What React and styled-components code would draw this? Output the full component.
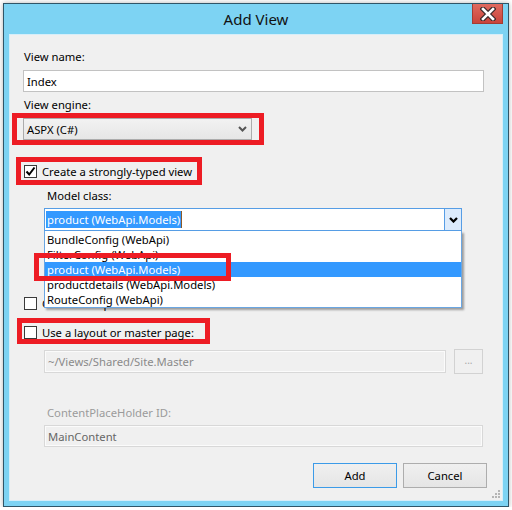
import React from "react";
import styled, { createGlobalStyle } from "styled-components";

const GlobalStyle = createGlobalStyle`
  html, body { margin: 0; padding: 0; background: #ffffff; }
  body { font-family: "Noto Sans", "Open Sans", sans-serif; font-size: 11.25px; color: #000; }
  * { box-sizing: border-box; }
`;

const Window = styled.div`
  margin: 3px 0 0 3px;
  width: 506px;
  height: 504px;
  border: 1px solid #2f5568;
  background: #7dd3f3;
  display: flex;
  flex-direction: column;
  position: relative;
  box-shadow: 0 0 5px rgba(0, 0, 0, 0.3);
`;

const TitleBar = styled.div`
  height: 30px;
  display: flex;
  align-items: center;
  justify-content: center;
  position: relative;
  font-size: 15px;
  color: #111;
  padding-bottom: 1px;
`;

const CloseButton = styled.div`
  position: absolute;
  top: 0;
  right: 5px;
  width: 31px;
  height: 20px;
  background: linear-gradient(#e06a5f, #c9443b);
  border: 1px solid #a33c33;
  border-top: none;
  display: flex;
  align-items: center;
  justify-content: center;
`;

const Client = styled.div`
  margin: 0 5px 5px 5px;
  flex: 1;
  background: #f0f0f0;
  box-shadow: inset 0 0 0 1px #d6eef9;
  position: relative;
  display: flex;
  flex-direction: column;
  align-items: flex-start;
`;

const Label = styled.div`
  margin-top: ${(p) => p.$top}px;
  margin-left: ${(p) => p.$left}px;
  height: 15px;
  line-height: 15px;
  white-space: nowrap;
  color: ${(p) => (p.$muted ? "#9b9b9b" : "#000")};
`;

const TextInput = styled.div`
  margin-top: ${(p) => p.$top}px;
  margin-left: ${(p) => p.$left}px;
  width: ${(p) => p.$width}px;
  height: ${(p) => p.$height || 22}px;
  border: 1px solid ${(p) => (p.$disabled ? "#d8d8d8" : "#c2c2c2")};
  box-shadow: ${(p) => (p.$disabled ? "inset 0 0 0 1px #fbfbfb" : "none")};
  background: ${(p) => (p.$disabled ? "#f0f0f0" : "#fff")};
  color: ${(p) => p.$color || "#000"};
  padding-left: 3px;
  display: flex;
  align-items: center;
  white-space: nowrap;
`;

const Highlight = styled.div`
  margin-top: ${(p) => p.$top}px;
  margin-left: ${(p) => p.$left}px;
  width: ${(p) => p.$width}px;
  height: ${(p) => p.$height}px;
  border: 5px solid #ed1c24;
  padding-left: ${(p) => p.$pad}px;
  display: flex;
  align-items: ${(p) => p.$align || "center"};
`;

const Select = styled.div`
  width: 229px;
  height: 22px;
  border: 1px solid #acacac;
  background: linear-gradient(#f2f2f2, #e6e6e6);
  display: flex;
  align-items: center;
  justify-content: space-between;
  padding: 0 4px 0 3px;
`;

const CheckRow = styled.div`
  display: flex;
  align-items: center;
  gap: 5px;
  margin-top: ${(p) => p.$top || 0}px;
  margin-left: ${(p) => p.$left || 0}px;
  height: 13px;
  white-space: nowrap;
`;

const Box = styled.div`
  width: 13px;
  height: 13px;
  border: 1px solid #3a3a3a;
  background: #fff;
  display: flex;
  align-items: center;
  justify-content: center;
  flex-shrink: 0;
`;

const ComboWrap = styled.div`
  margin-top: 5px;
  margin-left: 35px;
  width: 418px;
  height: 23px;
  position: relative;
  z-index: 2;
`;

const Combo = styled.div`
  width: 100%;
  height: 100%;
  border: 1px solid #569de5;
  background: #fff;
  display: flex;
  align-items: center;
  padding-left: 1px;
`;

const SelectedText = styled.span`
  background: #3399ff;
  color: #fff;
  height: 17px;
  line-height: 17px;
  padding: 0 1px;
  white-space: nowrap;
`;

const Caret = styled.span`
  width: 1px;
  height: 17px;
  background: #8a5a2a;
`;

const DropButton = styled.div`
  margin-left: auto;
  width: 17px;
  height: 100%;
  background: #dcebfc;
  border-left: 1px solid #569de5;
  display: flex;
  align-items: center;
  justify-content: center;
`;

const ListBox = styled.div`
  position: absolute;
  top: 100%;
  left: 0;
  width: 418px;
  height: 77px;
  background: #fff;
  border: 1px solid #6aa6e2;
  border-top: none;
  box-shadow: 2px 2px 2px rgba(0, 0, 0, 0.35);
  display: flex;
  flex-direction: column;
  padding-top: 1px;
`;

const ListItem = styled.div`
  height: 15px;
  line-height: 15px;
  padding-left: 2px;
  background: ${(p) => (p.$selected ? "#3399ff" : "transparent")};
  color: ${(p) => (p.$selected ? "#fff" : "#000")};
  white-space: nowrap;
`;

const ProductHighlight = styled.div`
  position: absolute;
  top: 45px;
  left: -10px;
  width: 197px;
  height: 28px;
  border: 5px solid #ed1c24;
  pointer-events: none;
`;

const PathRow = styled.div`
  margin-top: 5px;
  margin-left: 35px;
  display: flex;
  align-items: center;
  gap: 8px;
`;

const BrowseButton = styled.div`
  width: 29px;
  height: 25px;
  border: 1px solid #d2d2d2;
  background: #f0f0f0;
  color: #a8a8a8;
  font-size: 10px;
  display: flex;
  align-items: center;
  justify-content: center;
  padding-bottom: 3px;
`;

const ButtonRow = styled.div`
  margin-top: 16px;
  align-self: stretch;
  display: flex;
  justify-content: flex-end;
  gap: 6px;
  padding-right: 16px;
`;

const Button = styled.div`
  width: 84px;
  height: 25px;
  border: 1px solid ${(p) => (p.$primary ? "#3c9be8" : "#adadad")};
  background: linear-gradient(#f0f0f0, #e5e5e5);
  display: flex;
  align-items: center;
  justify-content: center;
`;

const Grip = styled.svg`
  position: absolute;
  right: 3px;
  bottom: 3px;
`;

const Chevron = ({ color = "#444", w = 3 }) => (
  <svg width="9" height="6" viewBox="0 0 9 6">
    <path d="M1 1 L4.5 4.5 L8 1" fill="none" stroke={color} strokeWidth={w / 1.5} />
  </svg>
);

const Check = () => (
  <svg width="11" height="11" viewBox="0 0 11 11">
    <path d="M1.5 5.5 L4.2 8.5 L9.5 1.5" fill="none" stroke="#000" strokeWidth="2" />
  </svg>
);

export default function App() {
  return (
    <>
      <GlobalStyle />
      <Window>
        <TitleBar>
          Add View
          <CloseButton>
            <svg width="16" height="14" viewBox="0 0 16 14">
              <path d="M3 2 L13 12 M13 2 L3 12" stroke="#3a2a2a" strokeWidth="5" strokeLinecap="square" />
              <path d="M3 2 L13 12 M13 2 L3 12" stroke="#fff" strokeWidth="2.6" strokeLinecap="square" />
            </svg>
          </CloseButton>
        </TitleBar>
        <Client>
          <Label $top={15} $left={15}>View name:</Label>
          <TextInput $top={6} $left={14} $width={461}>Index</TextInput>
          <Label $top={5} $left={15}>View engine:</Label>
          <Highlight $top={1} $left={3} $width={252} $height={32} $pad={6}>
            <Select>
              ASPX (C#)
              <Chevron color="#555" />
            </Select>
          </Highlight>
          <Highlight $top={12} $left={7} $width={186} $height={28} $pad={3}>
            <CheckRow>
              <Box><Check /></Box>
              Create a strongly-typed view
            </CheckRow>
          </Highlight>
          <Label $top={3} $left={38}>Model class:</Label>
          <ComboWrap>
            <Combo>
              <SelectedText>product (WebApi.Models)</SelectedText>
              <Caret />
              <DropButton>
                <Chevron color="#000" w={3.4} />
              </DropButton>
            </Combo>
            <ListBox>
              <ListItem>BundleConfig (WebApi)</ListItem>
              <ListItem>FilterConfig (WebApi)</ListItem>
              <ListItem $selected>product (WebApi.Models)</ListItem>
              <ListItem>productdetails (WebApi.Models)</ListItem>
              <ListItem>RouteConfig (WebApi)</ListItem>
            </ListBox>
            <ProductHighlight />
          </ComboWrap>
          <CheckRow $top={66} $left={15}>
            <Box />
            Create as a partial view
          </CheckRow>
          <Highlight $top={8} $left={8} $width={193} $height={26} $pad={2} $align="flex-end">
            <CheckRow>
              <Box />
              Use a layout or master page:
            </CheckRow>
          </Highlight>
          <PathRow>
            <TextInput $top={0} $left={0} $width={402} $height={23} $disabled $color="#8a8a8a">
              ~/Views/Shared/Site.Master
            </TextInput>
            <BrowseButton>...</BrowseButton>
          </PathRow>
          <Label $top={31} $left={38} $muted>ContentPlaceHolder ID:</Label>
          <TextInput $top={5} $left={35} $width={439} $disabled $color="#666">
            MainContent
          </TextInput>
          <ButtonRow>
            <Button $primary>Add</Button>
            <Button>Cancel</Button>
          </ButtonRow>
          <Grip width="8" height="8" viewBox="0 0 8 8">
            <g fill="#b5b5b5">
              <rect x="6" y="0" width="2" height="2" />
              <rect x="3" y="3" width="2" height="2" />
              <rect x="6" y="3" width="2" height="2" />
              <rect x="0" y="6" width="2" height="2" />
              <rect x="3" y="6" width="2" height="2" />
              <rect x="6" y="6" width="2" height="2" />
            </g>
          </Grip>
        </Client>
      </Window>
    </>
  );
}
